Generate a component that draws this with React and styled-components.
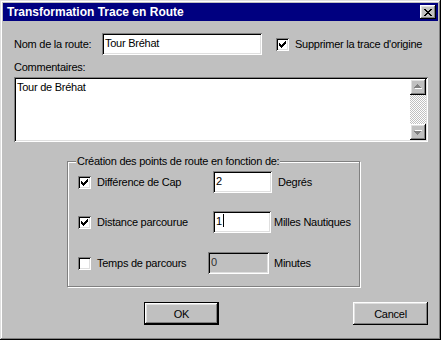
import React from 'react';
import styled, { createGlobalStyle, css } from 'styled-components';

const GlobalStyle = createGlobalStyle`
  html, body {
    margin: 0;
    padding: 0;
    background: #c0c0c0;
  }
  body {
    font-family: "Liberation Sans", Arial, sans-serif;
    font-size: 11px;
    letter-spacing: -0.25px;
    color: #000;
  }
`;

// bordures façon Windows 98
const raised = css`
  box-shadow: inset -1px -1px #000, inset 1px 1px #fff, inset -2px -2px #808080, inset 2px 2px #dfdfdf;
`;
const sunken = css`
  box-shadow: inset 1px 1px #808080, inset -1px -1px #fff, inset 2px 2px #000, inset -2px -2px #dfdfdf;
`;

function CheckMark() {
    const cols = [2, 3, 4, 3, 2, 1, 0];
    return (
        <svg width="7" height="7" viewBox="0 0 7 7" shapeRendering="crispEdges">
            {cols.map((y, x) => <rect key={x} x={x} y={y} width="1" height="3" fill="#000" />)}
        </svg>
    );
}

function CloseGlyph() {
    return (
        <svg width="8" height="7" viewBox="0 0 8 7" shapeRendering="crispEdges">
            <path d="M0 0h2v1h-2zM6 0h2v1h-2zM1 1h2v1h-2zM5 1h2v1h-2zM2 2h4v1h-4zM3 3h2v1h-2zM2 4h4v1h-4zM1 5h2v1h-2zM5 5h2v1h-2zM0 6h2v1h-2zM6 6h2v1h-2z" fill="#000" />
        </svg>
    );
}

function Arrow({ down }) {
    return (
        <svg width="8" height="6" viewBox="0 0 8 6" shapeRendering="crispEdges">
            <g transform={down ? 'translate(0 6) scale(1 -1)' : undefined}>
                <path d="M4 1h1v1h1v1h1v1h1v1h-7v-1h1v-1h1v-1h1z" fill="#fff" />
                <path d="M3 0h1v1h1v1h1v1h1v1h-7v-1h1v-1h1z" fill="#808080" />
            </g>
        </svg>
    );
}

function App() {
    return (
        <>
            <GlobalStyle />
            <Window>
                <TitleBar>
                    <span>Transformation Trace en Route</span>
                    <CloseButton><CloseGlyph /></CloseButton>
                </TitleBar>

                <Body>
                    <NameRow>
                        <NameLabel>Nom de la route:</NameLabel>
                        <Edit $w={160}>Tour Bréhat</Edit>
                        <Check $ml={14} $on><CheckMark /></Check>
                        <CheckText>Supprimer la trace d'origine</CheckText>
                    </NameRow>

                    <CommentLabel>Commentaires:</CommentLabel>
                    <Memo>
                        <MemoText>Tour de Bréhat</MemoText>
                        <ScrollBar>
                            <ScrollButton><Arrow /></ScrollButton>
                            <ScrollTrack />
                            <ScrollButton><Arrow down /></ScrollButton>
                        </ScrollBar>
                    </Memo>

                    <Group>
                        <Legend>Création des points de route en fonction de:</Legend>

                        <OptionRow $mt={3}>
                            <OptionCheck>
                                <Check $on><CheckMark /></Check>
                                <CheckText>Différence de Cap</CheckText>
                            </OptionCheck>
                            <Edit $w={59}>2</Edit>
                            <Unit $ml={6}>Degrés</Unit>
                        </OptionRow>

                        <OptionRow $mt={18}>
                            <OptionCheck>
                                <Check $on><CheckMark /></Check>
                                <CheckText>Distance parcourue</CheckText>
                            </OptionCheck>
                            <Edit $w={58}>1<Caret /></Edit>
                            <Unit $ml={3}>Milles Nautiques</Unit>
                        </OptionRow>

                        <OptionRow $mt={19}>
                            <OptionCheck>
                                <Check />
                                <CheckText>Temps de parcours</CheckText>
                            </OptionCheck>
                            <Edit $w={61} $ml={-5} $disabled>0</Edit>
                            <Unit $ml={5}>Minutes</Unit>
                        </OptionRow>
                    </Group>

                    <ButtonRow>
                        <Button $default>OK</Button>
                        <Button $right>Cancel</Button>
                    </ButtonRow>
                </Body>
            </Window>
        </>
    );
}

const Window = styled.div`
  width: 441px;
  height: 340px;
  box-sizing: border-box;
  padding: 3px;
  background: #c0c0c0;
  box-shadow: inset -1px -1px #000, inset 1px 1px #dfdfdf, inset -2px -2px #808080, inset 2px 2px #fff;
  display: flex;
  flex-direction: column;
`;

const TitleBar = styled.div`
  height: 18px;
  background: #000080;
  color: #fff;
  font-weight: bold;
  font-size: 12px;
  letter-spacing: 0;
  display: flex;
  align-items: center;
  justify-content: space-between;
  padding: 0 2px 0 4px;
`;

const CloseButton = styled.div`
  width: 16px;
  height: 14px;
  background: #c0c0c0;
  display: flex;
  align-items: center;
  justify-content: center;
  padding-right: 1px;
  box-sizing: border-box;
  ${raised}
`;

const Body = styled.div`
  flex: 1;
  display: flex;
  flex-direction: column;
  padding: 12px 10px 0 11px;
`;

const NameRow = styled.div`
  display: flex;
  align-items: center;
  height: 22px;
`;

const NameLabel = styled.div`
  width: 88px;
`;

const Edit = styled.div`
  width: ${p => p.$w}px;
  margin-left: ${p => p.$ml || 0}px;
  height: 22px;
  box-sizing: border-box;
  padding: 3px 3px 0;
  line-height: 14px;
  display: flex;
  align-items: flex-start;
  background: ${p => (p.$disabled ? '#c0c0c0' : '#fff')};
  color: ${p => (p.$disabled ? '#303030' : '#000')};
  ${sunken}
`;

const Caret = styled.span`
  display: inline-block;
  width: 1px;
  height: 13px;
  margin-left: 1px;
  background: #000;
`;

const Check = styled.div`
  width: 13px;
  height: 13px;
  flex: none;
  margin-left: ${p => p.$ml || 0}px;
  box-sizing: border-box;
  background: #fff;
  display: flex;
  align-items: center;
  justify-content: center;
  ${sunken}
`;

const CheckText = styled.span`
  margin-left: 6px;
  white-space: nowrap;
`;

const CommentLabel = styled.div`
  margin-top: 6px;
  line-height: 13px;
`;

const Memo = styled.div`
  margin-top: 3px;
  height: 65px;
  box-sizing: border-box;
  padding: 2px;
  background: #fff;
  display: flex;
  ${sunken}
`;

const MemoText = styled.div`
  flex: 1;
  padding: 2px 1px;
  line-height: 13px;
`;

const ScrollBar = styled.div`
  width: 16px;
  display: flex;
  flex-direction: column;
`;

const ScrollButton = styled.div`
  width: 16px;
  height: 16px;
  background: #c0c0c0;
  display: flex;
  align-items: center;
  justify-content: center;
  ${raised}
`;

const ScrollTrack = styled.div`
  flex: 1;
  background: repeating-conic-gradient(#c0c0c0 0 25%, #fff 0 50%) 0 0 / 2px 2px;
`;

const Group = styled.fieldset`
  margin: 13px 0 0 53px;
  width: 293px;
  box-sizing: border-box;
  padding: 0 0 12px 10px;
  border: 1px solid #808080;
  box-shadow: inset 1px 1px #fff, 1px 1px #fff;
  min-inline-size: 0;
`;

const Legend = styled.legend`
  margin-left: -2px;
  padding: 0 1px;
  line-height: 13px;
  background: #c0c0c0;
`;

const OptionRow = styled.div`
  display: flex;
  align-items: center;
  height: 22px;
  margin-top: ${p => p.$mt}px;
`;

const OptionCheck = styled.div`
  width: 135px;
  display: flex;
  align-items: center;
`;

const Unit = styled.span`
  margin-left: ${p => p.$ml}px;
  white-space: nowrap;
`;

const ButtonRow = styled.div`
  display: flex;
  margin-top: 15px;
  padding-left: 130px;
`;

const Button = styled.div`
  width: 75px;
  height: 23px;
  box-sizing: border-box;
  display: flex;
  align-items: center;
  justify-content: center;
  margin-left: ${p => (p.$right ? 'auto' : '0')};
  background: #c0c0c0;
  ${p => (p.$default
        ? css`box-shadow: inset 0 0 0 1px #000, inset -2px -2px #000, inset 2px 2px #fff, inset -3px -3px #808080, inset 3px 3px #dfdfdf;`
        : raised)}
`;

export default App;
